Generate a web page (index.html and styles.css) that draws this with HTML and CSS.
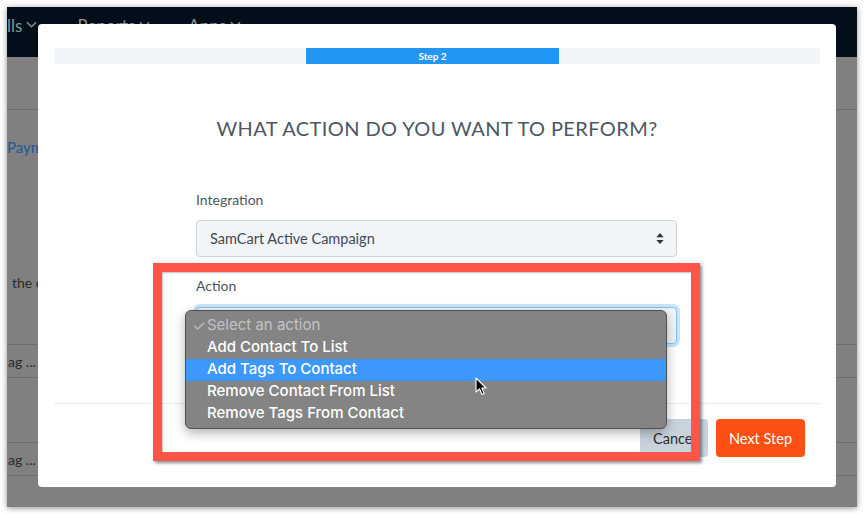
FILE: index.html
```html
<!DOCTYPE html>
<html>
<head>
<meta charset="utf-8">
<link rel="stylesheet" href="styles.css">
</head>
<body>
<div class="window">
  <nav class="topnav">
    <span class="nav-item first">lls <svg class="chev" viewBox="0 0 12 8"><polyline points="1,1 6,6 11,1"/></svg></span>
    <span class="nav-item">Reports <svg class="chev" viewBox="0 0 12 8"><polyline points="1,1 6,6 11,1"/></svg></span>
    <span class="nav-item">Apps <svg class="chev" viewBox="0 0 12 8"><polyline points="1,1 6,6 11,1"/></svg></span>
  </nav>
  <main class="page">
    <div class="prow prow-head"></div>
    <div class="prow prow-big">
      <span class="plink">Paym</span>
      <span class="ptext shift">the c</span>
    </div>
    <div class="prow prow-sm"><span class="ptext">ag ...</span></div>
    <div class="prow prow-mid"></div>
    <div class="prow prow-sm"><span class="ptext">ag ...</span></div>
    <div class="prow prow-rest"></div>
  </main>

  <div class="modal">
    <div class="progress">
      <div class="progress-step">Step 2</div>
    </div>
    <h2 class="modal-title">WHAT ACTION DO YOU WANT TO PERFORM?</h2>
    <div class="form">
      <label class="field-label">Integration</label>
      <div class="select">
        <span>SamCart Active Campaign</span>
        <svg class="updown" viewBox="0 0 8 12"><polygon points="4,0 8,4.5 0,4.5"/><polygon points="0,7.5 8,7.5 4,12"/></svg>
      </div>
      <label class="field-label action-label">Action</label>
      <div class="select focused"></div>
    </div>
    <div class="modal-footer">
      <button class="btn btn-cancel">Cancel</button>
      <button class="btn btn-next">Next Step</button>
    </div>
  </div>

  <div class="annotation"></div>

  <ul class="menu">
    <li class="opt placeholder"><span class="check">✓</span>Select an action</li>
    <li class="opt">Add Contact To List</li>
    <li class="opt active">Add Tags To Contact</li>
    <li class="opt">Remove Contact From List</li>
    <li class="opt">Remove Tags From Contact</li>
  </ul>

  <svg class="cursor" viewBox="0 0 12 19"><path d="M1 1 L1 15 L4.5 11.8 L7 17.5 L9.2 16.5 L6.8 11 L11 11 Z" fill="#000" stroke="#fff" stroke-width="1.1" stroke-linejoin="round"/></svg>
</div>
</body>
</html>
```
FILE: styles.css
```css
* { box-sizing: border-box; }
html, body { margin: 0; padding: 0; }
body {
  background: #ffffff;
  padding: 7px;
  font-family: Lato, "Open Sans", sans-serif;
}
.window {
  position: relative;
  width: 850px;
  height: 500px;
  overflow: hidden;
  background: #808080;
  box-shadow: 0 1px 6px rgba(0,0,0,0.45);
}
.topnav {
  height: 50px;
  background: #020f1a;
  display: flex;
  align-items: flex-start;
  padding-top: 7px;
  color: #8d9298;
  font-size: 17px;
}
.nav-item {
  display: flex;
  align-items: center;
  gap: 4px;
  height: 22px;
  margin-right: 38px;
}
.nav-item.first { margin-left: 0; margin-right: 40px; }
.chev { width: 11px; height: 8px; fill: none; stroke: #8d9298; stroke-width: 1.6; }

.page { font-size: 14px; }
.prow { border-bottom: 1px solid #6c6c6c; overflow: hidden; white-space: nowrap; }
.prow-head { height: 53px; }
.prow-big { height: 235px; display: flex; flex-direction: column; align-items: flex-start; padding-top: 28px; }
.prow-sm { height: 33px; display: flex; align-items: center; padding-left: 1px; }
.prow-mid { height: 65px; }
.prow-rest { height: 60px; border-bottom: none; }
.plink { color: #1d5a93; font-size: 15px; }
.ptext { color: #2a2a2a; }
.shift { margin-top: 118px; margin-left: 5px; }

.modal {
  position: absolute;
  left: 31px;
  top: 17px;
  width: 798px;
  height: 463px;
  background: #fff;
  border-radius: 4px;
  padding: 24px 16px 0;
  color: #4b5661;
}
.progress {
  height: 16px;
  background: #f1f5f8;
  border-radius: 4px;
  padding-left: 252px;
}
.progress-step {
  width: 253px;
  height: 16px;
  background: #2196f3;
  color: #fff;
  font-size: 10px;
  font-weight: 700;
  text-align: center;
  line-height: 16px;
}
.modal-title {
  margin: 52px 0 0;
  text-align: center;
  font-weight: 400;
  font-size: 20px;
  line-height: 24px;
  letter-spacing: 0.4px;
  color: #4c5763;
}
.form {
  width: 481px;
  margin: 50px 0 0 142px;
}
.field-label {
  display: block;
  font-size: 14px;
  line-height: 20px;
  margin-bottom: 10px;
  color: #4b5661;
}
.action-label { margin-top: 19px; }
.select {
  height: 37px;
  background: #f2f5f8;
  border: 1px solid #cbd4dd;
  border-radius: 4px;
  display: flex;
  align-items: center;
  justify-content: space-between;
  padding: 0 12px 0 13px;
  font-size: 14.5px;
  color: #3f4a55;
}
.select.focused {
  margin-top: 11px;
  border-color: #86bdf5;
  box-shadow: 0 0 0 3px rgba(33,150,243,0.25);
}
.updown { width: 8px; height: 11px; fill: #333; }
.modal-footer {
  margin-top: 59px;
  border-top: 1px solid #e9ecef;
  padding: 15px 15px 0 0;
  display: flex;
  justify-content: flex-end;
  gap: 8px;
}
.btn {
  height: 38px;
  border: none;
  border-radius: 4px;
  font-family: Lato, sans-serif;
  font-size: 14.5px;
  padding: 0;
}
.btn-cancel { width: 68px; background: #c9d3dd; color: #2b2b2b; text-align: left; padding-left: 13px; }
.btn-next { width: 89px; background: #fe5012; color: #fff; }

.annotation {
  position: absolute;
  left: 146px;
  top: 256px;
  width: 547px;
  height: 198px;
  border: 9px solid #fd5649;
  box-shadow: 2px 2px 3px rgba(0,0,0,0.45), inset 1px 1px 2px rgba(0,0,0,0.25);
}

.menu {
  position: absolute;
  left: 178px;
  top: 303px;
  width: 482px;
  height: 119px;
  margin: 0;
  padding: 4px 0 0;
  list-style: none;
  background: #848484;
  border: 1px solid #505050;
  border-radius: 6px;
  box-shadow: 0 4px 12px rgba(0,0,0,0.3);
  font-family: Inter, "Liberation Sans", sans-serif;
  font-size: 15px;
  font-weight: 500;
  color: #fff;
}
.opt {
  height: 22px;
  line-height: 20px;
  padding-left: 21px;
  position: relative;
}
.opt.placeholder { color: #c3c3c3; font-weight: 400; }
.check { position: absolute; left: 6px; top: 0; font-size: 16px; color: #b8b8b8; }
.opt.active { background: #3d98fd; }

.cursor {
  position: absolute;
  left: 468px;
  top: 370px;
  width: 12px;
  height: 19px;
}
```
